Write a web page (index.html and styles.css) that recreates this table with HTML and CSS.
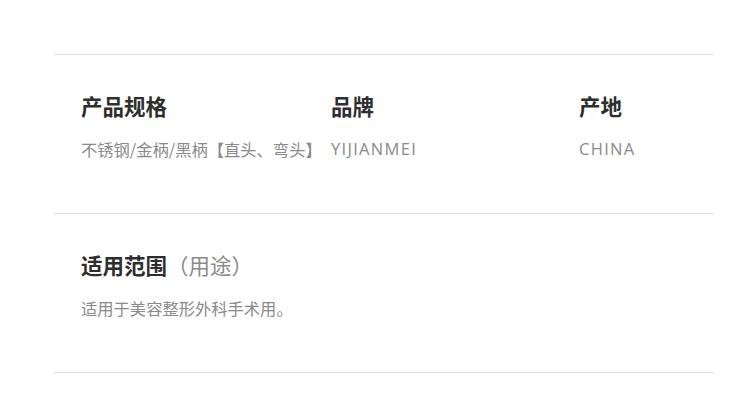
FILE: index.html
```html
<!DOCTYPE html>
<html>
<head>
  <meta charset="UTF-8">
  <title>产品参数</title>
  <meta name="viewport" content="width=device-width, initial-scale=1">
  <link rel="stylesheet" href="styles.css">
</head>
<body>
  <div class="params">
    <div class="seccion fila">
      <div class="campo">
        <h3>产品规格</h3>
        <p>不锈钢/金柄/黑柄【直头、弯头】</p>
      </div>
      <div class="campo">
        <h3>品牌</h3>
        <p class="latin">YIJIANMEI</p>
      </div>
      <div class="campo">
        <h3>产地</h3>
        <p class="latin">CHINA</p>
      </div>
    </div>
    <div class="seccion">
      <div class="campo">
        <h3>适用范围<span class="nota">（用途）</span></h3>
        <p>适用于美容整形外科手术用。</p>
      </div>
    </div>
  </div>
</body>
</html>
```

FILE: styles.css
```css
body { font-family: "Noto Sans CJK SC", "Noto Sans", sans-serif; background: #fff; margin: 0; }
.params {
  width: 660px;
  margin: 54px 0 0 54px;
  border-bottom: 1px solid #dcdcdc;
}
.seccion {
  border-top: 1px solid #dcdcdc;
  padding: 36px 0 51px 27px;
}
.fila {
  display: grid;
  grid-template-columns: 250px 248px auto;
}
.campo h3 {
  margin: 0 0 15px;
  font-size: 21.5px;
  line-height: 30px;
  font-weight: bold;
  color: #2e2e2e;
}
.campo p {
  margin: 0;
  font-size: 16.3px;
  line-height: 26px;
  color: #8a8a8a;
}
.campo p.latin {
  font-family: "Open Sans", sans-serif;
  font-size: 16.5px;
  letter-spacing: 1.3px;
}
.nota { font-weight: normal; color: #8a8a8a; }
```
